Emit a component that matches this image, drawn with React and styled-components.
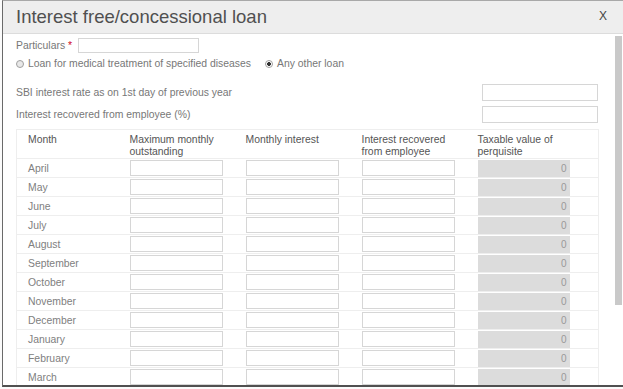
import React from "react";
import styled, { createGlobalStyle } from "styled-components";

const Global = createGlobalStyle`
  html, body { margin: 0; padding: 0; background: #fff; overflow: hidden; }
  body { font-family: "Liberation Sans", Arial, Helvetica, sans-serif; }
  * { box-sizing: border-box; }
`;

const Page = styled.div`
  width: 623px;
  height: 389px;
  background: #fbfbfb;
  padding-left: 2px;
  overflow: hidden;
`;

const Dialog = styled.div`
  width: 623px;
  height: 387px;
  background: #fff;
  border: 1px solid #a8a8a8;
  border-left-color: #6a6a6a;
  border-bottom: 2px solid #505050;
  display: flex;
  flex-direction: column;
`;

const Header = styled.div`
  height: 33px;
  flex: none;
  background: #eeeeee;
  border-bottom: 1px solid #dcdcdc;
  display: flex;
  align-items: center;
  justify-content: space-between;
  padding: 0 17px 0 13px;
`;

const Title = styled.h1`
  margin: 0;
  font-size: 18.5px;
  font-weight: 400;
  color: #505050;
`;

const Close = styled.span`
  font-size: 12px;
  color: #444;
  margin-top: -3px;
`;

const Main = styled.div`
  flex: 1;
  display: flex;
  overflow: hidden;
`;

const Body = styled.div`
  flex: 1;
  overflow: hidden;
  padding: 3px 0 0 13px;
`;

const ScrollTrack = styled.div`
  width: 11px;
  flex: none;
  padding: 2px 2px 0 2px;
  background: #fff;
`;

const ScrollThumb = styled.div`
  width: 7px;
  height: 269px;
  background: #c9c9c9;
`;

const Content = styled.div`
  width: 582px;
  padding-bottom: 96px;
`;

const Row = styled.div`
  display: flex;
  align-items: center;
  justify-content: ${(p) => (p.$spread ? "space-between" : "flex-start")};
  height: ${(p) => p.$h || 22}px;
  gap: ${(p) => p.$gap || 0}px;
`;

const Label = styled.label`
  font-size: 10.4px;
  color: #777;
`;

const Req = styled.span`
  color: #d0021b;
  margin-left: 3px;
`;

const TextInput = styled.input`
  width: ${(p) => p.$w}px;
  height: ${(p) => p.$h || 16}px;
  border: 1px solid #d6d6d6;
  background: #fff;
  margin: 0;
  padding: 0 3px;
  font: inherit;
  font-size: 11px;
  outline: none;
`;

const RadioGroup = styled.div`
  display: flex;
  align-items: center;
  gap: 14px;
`;

const RadioItem = styled.span`
  display: flex;
  align-items: center;
  gap: 4px;
  font-size: 10.4px;
  color: #777;
`;

const RadioDot = styled.span`
  width: 8px;
  height: 8px;
  border-radius: 50%;
  border: 1px solid #a0a0a0;
  background: ${(p) => (p.$on ? "radial-gradient(circle, #333 0 1.6px, #fff 2.2px)" : "#e8e8e8")};
  display: inline-block;
`;

const Table = styled.table`
  width: 582px;
  border-collapse: collapse;
  table-layout: fixed;
  margin-top: 4px;
  border-left: 1px solid #eee;
  border-right: 1px solid #eee;
`;

const Col = styled.col`
  width: ${(p) => p.$w}px;
`;

const Th = styled.th`
  text-align: left;
  vertical-align: top;
  font-weight: 400;
  font-size: 10.4px;
  line-height: 12px;
  color: #555;
  padding: 4px 0 0 11px;
  height: 28px;
  border-top: 1px solid #eee;
`;

const Td = styled.td`
  height: 19px;
  padding: 0 0 0 11px;
  border-top: 1px solid #eee;
  font-size: 10.4px;
  color: #808080;
  vertical-align: middle;
`;

const ReadOnly = styled.div`
  width: 92px;
  height: 17px;
  background: #dcdcdc;
  color: #999;
  font-size: 10px;
  text-align: right;
  line-height: 17px;
  padding-right: 3px;
`;

const months = [
  "April", "May", "June", "July", "August", "September",
  "October", "November", "December", "January", "February", "March",
];

export default function App() {
  return (
    <>
      <Global />
      <Page>
        <Dialog>
          <Header>
            <Title>Interest free/concessional loan</Title>
            <Close>X</Close>
          </Header>
          <Main>
            <Body>
              <Content>
                <Row $h={16} $gap={6}>
                  <Label>
                    Particulars<Req>*</Req>
                  </Label>
                  <TextInput $w={121} $h={15} />
                </Row>
                <Row $h={21}>
                  <RadioGroup>
                    <RadioItem>
                      <RadioDot />
                      Loan for medical treatment of specified diseases
                    </RadioItem>
                    <RadioItem>
                      <RadioDot $on />
                      Any other loan
                    </RadioItem>
                  </RadioGroup>
                </Row>
                <Row $h={7} />
                <Row $spread $h={22}>
                  <Label>SBI interest rate as on 1st day of previous year</Label>
                  <TextInput $w={116} $h={17} />
                </Row>
                <Row $spread $h={22}>
                  <Label>Interest recovered from employee (%)</Label>
                  <TextInput $w={116} $h={17} />
                </Row>
                <Table>
                  <colgroup>
                    <Col $w={102} />
                    <Col $w={116} />
                    <Col $w={116} />
                    <Col $w={116} />
                    <Col $w={132} />
                  </colgroup>
                  <thead>
                    <tr>
                      <Th>Month</Th>
                      <Th>Maximum monthly outstanding</Th>
                      <Th>Monthly interest</Th>
                      <Th>Interest recovered from employee</Th>
                      <Th>Taxable value of perquisite</Th>
                    </tr>
                  </thead>
                  <tbody>
                    {months.map((m) => (
                      <tr key={m}>
                        <Td>{m}</Td>
                        <Td><TextInput $w={93} $h={16} /></Td>
                        <Td><TextInput $w={93} $h={16} /></Td>
                        <Td><TextInput $w={93} $h={16} /></Td>
                        <Td><ReadOnly>0</ReadOnly></Td>
                      </tr>
                    ))}
                  </tbody>
                </Table>
              </Content>
            </Body>
            <ScrollTrack>
              <ScrollThumb />
            </ScrollTrack>
          </Main>
        </Dialog>
      </Page>
    </>
  );
}
